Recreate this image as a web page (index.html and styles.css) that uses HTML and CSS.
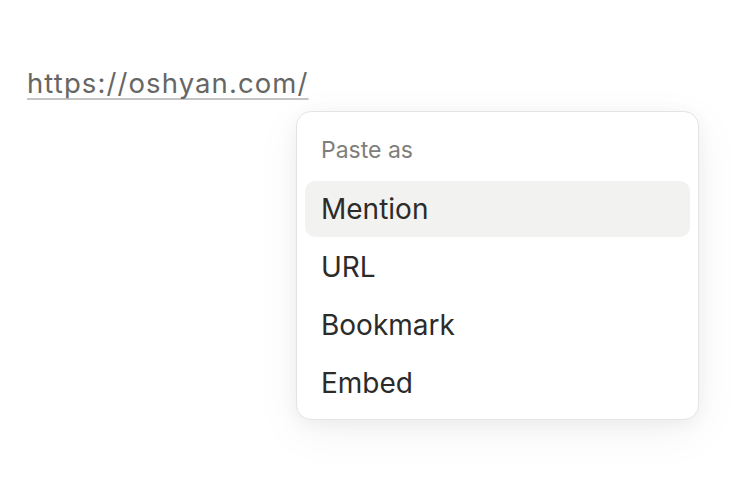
FILE: index.html
```html
<!DOCTYPE html>
<html>
<head>
<meta charset="utf-8">
<link rel="stylesheet" href="styles.css">
</head>
<body>
<div class="page">
  <p class="url-line"><a class="url" href="#">https://oshyan.com/</a></p>
  <div class="menu">
    <div class="menu-header">Paste as</div>
    <div class="menu-item is-active">Mention</div>
    <div class="menu-item">URL</div>
    <div class="menu-item">Bookmark</div>
    <div class="menu-item">Embed</div>
  </div>
</div>
</body>
</html>
```
FILE: styles.css
```css
html, body {
  margin: 0;
  padding: 0;
  background: #ffffff;
}
.page {
  font-family: Inter, "Noto Sans", sans-serif;
  width: 750px;
  height: 488px;
  overflow: hidden;
}
.url-line {
  margin: 0;
  padding: 67px 0 0 27px;
  font-size: 27.5px;
  line-height: 32px;
  letter-spacing: 1.1px;
}
.url {
  color: #666664;
  text-decoration: underline;
  text-decoration-color: #c4c4c2;
  text-decoration-thickness: 2px;
  text-underline-offset: 5px;
  text-decoration-skip-ink: none;
}
.menu {
  margin: 12px 0 0 296px;
  width: 385px;
  padding: 8px;
  border: 1px solid #e4e4e2;
  border-radius: 15px;
  background: #ffffff;
  display: flex;
  flex-direction: column;
  gap: 2px;
  box-shadow: 0 4px 18px rgba(0,0,0,0.05), 0 12px 48px rgba(0,0,0,0.05);
}
.menu-header {
  padding: 16px 16px 15px;
  font-size: 23px;
  line-height: 28px;
  color: #7f7e7a;
}
.menu-item {
  height: 56px;
  line-height: 56px;
  padding: 0 16px;
  font-size: 28px;
  color: #2b2b2a;
  border-radius: 10px;
}
.menu-item.is-active {
  background: #f2f2f1;
}
```
